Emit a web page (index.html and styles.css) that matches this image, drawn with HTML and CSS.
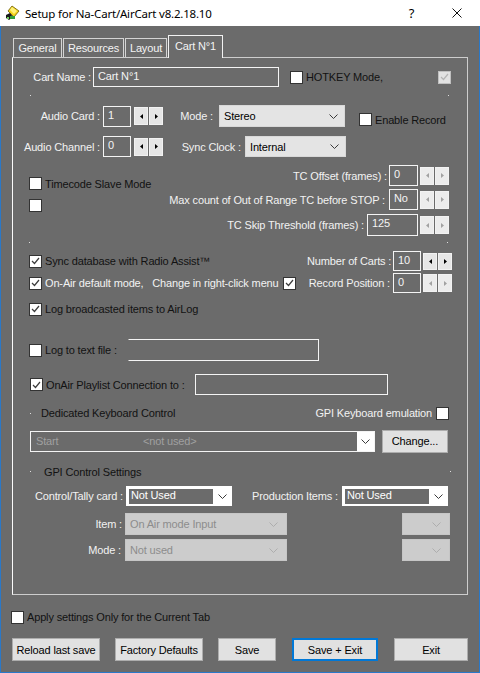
FILE: index.html
```html
<!DOCTYPE html>
<html>
<head>
<meta charset="utf-8">
<link rel="stylesheet" href="styles.css">
</head>
<body>
<div class="window">
  <div class="titlebar">
    <svg class="app-icon" viewBox="0 0 16 16">
      <polygon points="7,1 14,6 9,12 3,6" fill="#f3d21b" stroke="#6b5a00" stroke-width="0.8"/>
      <polygon points="7,2 12,6 9,9 5,5" fill="#fff27a"/>
      <polygon points="1,10 5,8 8,12 4,15 1,13" fill="#1a1a1a"/>
      <rect x="5" y="11" width="5" height="3" fill="#2f9e3a"/>
      <rect x="2" y="12" width="2" height="2" fill="#6fcf5a"/>
    </svg>
    <span class="title">Setup for Na-Cart/AirCart v8.2.18.10</span>
    <span class="help">?</span>
    <span class="close"><svg viewBox="0 0 10 10" class="close-x"><path d="M0.5 0.5L9.5 9.5M9.5 0.5L0.5 9.5" stroke="#111" stroke-width="1" fill="none"/></svg></span>
  </div>

  <div class="tabs">
    <div class="tab t-general">General</div>
    <div class="tab t-res">Resources</div>
    <div class="tab t-layout">Layout</div>
    <div class="tab t-cart active">Cart N°1</div>
  </div>

  <div class="panel">
    <!-- Cart name -->
    <div class="row r-name">
      <span class="lbl w80 pr2">Cart Name :</span>
      <span class="field w186 h20">Cart N°1</span>
      <span class="chk ml11 w148"><span class="cb"></span><span class="dark">HOTKEY Mode,</span></span>
      <span class="cb cb-dis"><svg viewBox="0 0 9 8"><polyline points="1,4 3.5,6.5 8,1" fill="none" stroke="#b4b4b4" stroke-width="1.2"/></svg></span>
    </div>
    <div class="row dots d1"><i class="dot"></i><i class="dot"></i></div>

    <!-- Audio card -->
    <div class="row r-card">
      <span class="lbl w90 pr3">Audio Card :</span>
      <span class="field w28 h21">1</span>
      <span class="spin ml3"><span class="sb"><svg viewBox="0 0 3 5" class="tri"><path d="M3 0V5L0 2.5Z"/></svg></span><span class="sb"><svg viewBox="0 0 3 5" class="tri"><path d="M0 0V5L3 2.5Z"/></svg></span></span>
      <span class="lbl w56 pr6">Mode :</span>
      <span class="combo w126 h22"><span>Stereo</span><svg class="chev" viewBox="0 0 9 5"><polyline points="0.5,0.5 4.5,4.5 8.5,0.5"/></svg></span>
      <span class="chk ml14 low"><span class="cb"></span><span class="dark">Enable Record</span></span>
    </div>

    <!-- Audio channel -->
    <div class="row r-chan">
      <span class="lbl w90 pr3">Audio Channel :</span>
      <span class="field w28 h21">0</span>
      <span class="spin ml3"><span class="sb"><svg viewBox="0 0 3 5" class="tri"><path d="M3 0V5L0 2.5Z"/></svg></span><span class="sb"><svg viewBox="0 0 3 5" class="tri"><path d="M0 0V5L3 2.5Z"/></svg></span></span>
      <span class="lbl w82 pr4">Sync Clock :</span>
      <span class="combo w101 h21"><span>Internal</span><svg class="chev" viewBox="0 0 9 5"><polyline points="0.5,0.5 4.5,4.5 8.5,0.5"/></svg></span>
    </div>

    <!-- Timecode -->
    <div class="tc">
      <div class="tc-left">
        <span class="chk"><span class="cb"></span><span class="dark">Timecode Slave Mode</span></span>
        <span class="cb tc-cb2"></span>
      </div>
      <div class="tc-right">
        <div class="row tc1">
          <span class="lbl">TC Offset (frames) :</span>
          <span class="field w29 h21 ml2">0</span>
          <span class="spin dis ml2"><span class="sb"><svg viewBox="0 0 3 5" class="tri"><path d="M3 0V5L0 2.5Z"/></svg></span><span class="sb"><svg viewBox="0 0 3 5" class="tri"><path d="M0 0V5L3 2.5Z"/></svg></span></span>
        </div>
        <div class="row tc2">
          <span class="lbl">Max count of Out of Range TC before STOP :</span>
          <span class="field w29 h21 ml4">No</span>
          <span class="spin dis ml2"><span class="sb"><svg viewBox="0 0 3 5" class="tri"><path d="M3 0V5L0 2.5Z"/></svg></span><span class="sb"><svg viewBox="0 0 3 5" class="tri"><path d="M0 0V5L3 2.5Z"/></svg></span></span>
        </div>
        <div class="row tc3">
          <span class="lbl">TC Skip Threshold (frames) :</span>
          <span class="field w51 h22 ml3">125</span>
          <span class="spin dis ml2"><span class="sb"><svg viewBox="0 0 3 5" class="tri"><path d="M3 0V5L0 2.5Z"/></svg></span><span class="sb"><svg viewBox="0 0 3 5" class="tri"><path d="M0 0V5L3 2.5Z"/></svg></span></span>
        </div>
      </div>
    </div>
    <div class="row dots d2"><i class="dot"></i><i class="dot"></i></div>

    <!-- Sync -->
    <div class="row s1">
      <span class="chk w278"><span class="cb"><svg viewBox="0 0 9 8"><polyline points="1,4 3.5,6.5 8,1" fill="none" stroke="#3c3c3c" stroke-width="1.2"/></svg></span><span class="dark">Sync database with Radio Assist™</span></span>
      <span class="lbl w86 pr3">Number of Carts :</span>
      <span class="field w28 h20">10</span>
      <span class="spin ml2 act"><span class="sb"><svg viewBox="0 0 3 5" class="tri"><path d="M3 0V5L0 2.5Z"/></svg></span><span class="sb"><svg viewBox="0 0 3 5" class="tri"><path d="M0 0V5L3 2.5Z"/></svg></span></span>
    </div>
    <div class="row s2">
      <span class="chk w254"><span class="cb"><svg viewBox="0 0 9 8"><polyline points="1,4 3.5,6.5 8,1" fill="none" stroke="#3c3c3c" stroke-width="1.2"/></svg></span><span>On-Air default mode,   Change in right-click menu</span></span>
      <span class="cb"><svg viewBox="0 0 9 8"><polyline points="1,4 3.5,6.5 8,1" fill="none" stroke="#3c3c3c" stroke-width="1.2"/></svg></span>
      <span class="lbl w97 pr3">Record Position :</span>
      <span class="field w28 h20">0</span>
      <span class="spin dis ml2"><span class="sb"><svg viewBox="0 0 3 5" class="tri"><path d="M3 0V5L0 2.5Z"/></svg></span><span class="sb"><svg viewBox="0 0 3 5" class="tri"><path d="M0 0V5L3 2.5Z"/></svg></span></span>
    </div>
    <div class="row s3">
      <span class="chk"><span class="cb"><svg viewBox="0 0 9 8"><polyline points="1,4 3.5,6.5 8,1" fill="none" stroke="#3c3c3c" stroke-width="1.2"/></svg></span><span class="dark">Log broadcasted items to AirLog</span></span>
    </div>

    <!-- Log to text file -->
    <div class="row r-log">
      <span class="chk w99"><span class="cb"></span><span class="dark">Log to text file :</span></span>
      <span class="field open w191 h22"></span>
    </div>
    <div class="row r-onair">
      <span class="chk w165"><span class="cb"><svg viewBox="0 0 9 8"><polyline points="1,4 3.5,6.5 8,1" fill="none" stroke="#3c3c3c" stroke-width="1.2"/></svg></span><span class="dark">OnAir Playlist Connection to :</span></span>
      <span class="field w193 h21"></span>
    </div>

    <!-- Dedicated keyboard -->
    <div class="row r-ded">
      <i class="dot"></i>
      <span class="dark ml10">Dedicated Keyboard Control</span>
      <span class="push">GPI Keyboard emulation</span>
      <span class="cb ml4"></span>
    </div>
    <div class="row r-keycombo">
      <span class="bigcombo w345 h21"><span class="val"><span class="start">Start</span><span>&lt;not used&gt;</span></span><span class="arr"><svg class="chev" viewBox="0 0 9 5"><polyline points="0.5,0.5 4.5,4.5 8.5,0.5"/></svg></span></span>
      <span class="btn w66 h22 ml7">Change...</span>
    </div>

    <!-- GPI control -->
    <div class="row r-gpi">
      <i class="dot"></i>
      <span class="dark ml13">GPI Control Settings</span>
      <i class="dot push"></i>
    </div>
    <div class="row r-ctl">
      <span class="lbl w113 pr3">Control/Tally card :</span>
      <span class="combo-dark w106 h20"><span class="val">Not Used</span><span class="arr"><svg class="chev" viewBox="0 0 9 5"><polyline points="0.5,0.5 4.5,4.5 8.5,0.5"/></svg></span></span>
      <span class="lbl w110 pr4">Production Items :</span>
      <span class="combo-dark w106 h20"><span class="val">Not Used</span><span class="arr"><svg class="chev" viewBox="0 0 9 5"><polyline points="0.5,0.5 4.5,4.5 8.5,0.5"/></svg></span></span>
    </div>
    <div class="row r-item">
      <span class="lbl w112 pr3">Item :</span>
      <span class="dcombo w162 h22"><span>On Air mode Input</span><svg class="chev" viewBox="0 0 9 5"><polyline points="0.5,0.5 4.5,4.5 8.5,0.5"/></svg></span>
      <span class="dcombo w48 h22 ml115"><span></span><svg class="chev" viewBox="0 0 9 5"><polyline points="0.5,0.5 4.5,4.5 8.5,0.5"/></svg></span>
    </div>
    <div class="row r-mode">
      <span class="lbl w112 pr4">Mode :</span>
      <span class="dcombo w162 h22"><span>Not used</span><svg class="chev" viewBox="0 0 9 5"><polyline points="0.5,0.5 4.5,4.5 8.5,0.5"/></svg></span>
      <span class="dcombo w48 h22 ml115"><span></span><svg class="chev" viewBox="0 0 9 5"><polyline points="0.5,0.5 4.5,4.5 8.5,0.5"/></svg></span>
    </div>
  </div>

  <div class="row r-apply">
    <span class="chk"><span class="cb"></span><span class="dark">Apply settings Only for the Current Tab</span></span>
  </div>

  <div class="row r-buttons">
    <span class="btn w88">Reload last save</span>
    <span class="btn w88 ml15">Factory Defaults</span>
    <span class="btn w58 ml15">Save</span>
    <span class="btn w86 ml16 focus">Save + Exit</span>
    <span class="btn w74 ml16">Exit</span>
  </div>
</div>
</body>
</html>
```

FILE: styles.css
```css
* { box-sizing: border-box; margin: 0; padding: 0; }
body {
  margin: 0;
  background: #6b6b6b;
  font-family: "Liberation Sans", Arial, sans-serif;
  font-size: 11px;
  letter-spacing: -0.15px;
  color: #f2f2f2;
}
.window {
  width: 480px;
  height: 673px;
  background: #6b6b6b;
  box-shadow: inset 1px 0 #2a78c8, inset -1px 0 #2a78c8, inset 0 -1px #2a78c8;
  display: flex;
  flex-direction: column;
  overflow: hidden;
}
.titlebar {
  height: 26px;
  background: #fff;
  display: flex;
  align-items: center;
  color: #000;
  flex: none;
}
.app-icon { width: 16px; height: 16px; margin-left: 5px; flex: none; }
.title {
  flex: 1;
  margin-left: 4px;
  font-family: "Noto Sans", sans-serif;
  font-size: 11.5px;
  letter-spacing: -0.2px;
  white-space: nowrap;
}
.help {
  width: 45px;
  text-align: center;
  font-family: "Noto Sans", sans-serif;
  font-size: 13px;
  letter-spacing: 0;
}
.close { width: 46px; height: 26px; display: flex; align-items: center; justify-content: center; }
.close-x { width: 10px; height: 10px; }

.tabs {
  display: flex;
  align-items: flex-end;
  height: 22px;
  margin-top: 9px;
  padding-left: 13px;
  flex: none;
  position: relative;
  z-index: 1;
}
.tab {
  height: 19px;
  border: 1px solid #d4d4d4;
  border-bottom: none;
  margin-right: 1px;
  display: flex;
  align-items: center;
  justify-content: center;
  color: #f4f4f4;
  flex: none;
}
.t-general { width: 49px; }
.t-res { width: 61px; }
.t-layout { width: 42px; }
.t-cart { width: 55px; }
.tab.active {
  height: 23px;
  margin-bottom: -1px;
  background: #6b6b6b;
  border-color: #f2f2f2;
  padding-bottom: 2px;
}

.panel {
  margin-left: 12px;
  width: 456px;
  height: 538px;
  border: 1px solid #cdcdcd;
  border-left-color: #fbfbfb;
  display: flex;
  flex-direction: column;
  flex: none;
}

.row { display: flex; align-items: center; flex: none; }
.lbl { text-align: right; white-space: nowrap; flex: none; }
.dark { color: #121212; }
.push { margin-left: auto; }

/* widths / spacing helpers */
.w28 { width: 28px; } .w29 { width: 29px; } .w48 { width: 48px; } .w51 { width: 51px; }
.w56 { width: 56px; } .w58 { width: 58px; } .w66 { width: 66px; } .w74 { width: 74px; }
.w80 { width: 80px; } .w82 { width: 82px; } .w86 { width: 86px; } .w88 { width: 88px; }
.w90 { width: 90px; } .w97 { width: 97px; } .w99 { width: 99px; } .w101 { width: 101px; }
.w106 { width: 106px; } .w110 { width: 110px; } .w112 { width: 112px; } .w113 { width: 113px; }
.w126 { width: 126px; } .w148 { width: 148px; } .w162 { width: 162px; } .w165 { width: 165px; }
.w186 { width: 186px; } .w191 { width: 191px; } .w193 { width: 193px; } .w254 { width: 254px; }
.w278 { width: 278px; } .w345 { width: 345px; }
.h20 { height: 20px; } .h21 { height: 21px; } .h22 { height: 22px; }
.pr2 { padding-right: 2px; } .pr3 { padding-right: 3px; } .pr4 { padding-right: 4px; } .pr6 { padding-right: 6px; }
.ml2 { margin-left: 2px; } .ml3 { margin-left: 3px; } .ml4 { margin-left: 4px; } .ml7 { margin-left: 7px; }
.ml10 { margin-left: 10px; } .ml11 { margin-left: 11px; } .ml13 { margin-left: 13px; } .ml14 { margin-left: 14px; }
.ml15 { margin-left: 15px; } .ml16 { margin-left: 16px; } .ml115 { margin-left: 115px; }

/* controls */
.field {
  border: 1px solid #f4f4f4;
  padding: 2px 0 0 4px;
  line-height: 13px;
  color: #f4f4f4;
  flex: none;
  white-space: nowrap;
  overflow: hidden;
}
.field.open { border-left-color: transparent; }

.spin { display: flex; flex: none; height: 18px; gap: 1px; }
.sb {
  width: 14px;
  height: 100%;
  background: #e6e6e6;
  border: 1px solid #f2f2f2;
  display: flex;
  align-items: center;
  justify-content: center;
}
.tri { width: 3px; height: 5px; fill: #000; }
.spin.dis .sb { background: #ececec; }
.spin.dis .tri { fill: #a2a2a2; }
.spin.act { height: 17px; }

.chev { width: 9px; height: 5px; fill: none; stroke: #3a3a3a; stroke-width: 1; flex: none; }

.combo {
  background: #e4e4e4;
  border: 1px solid #d8d8d8;
  color: #000;
  display: flex;
  align-items: center;
  justify-content: space-between;
  padding: 0 6px 0 4px;
  flex: none;
}
.combo-dark {
  background: #fff;
  padding: 3px 0 2px 3px;
  display: flex;
  flex: none;
}
.combo-dark .val {
  flex: 1;
  background: #6b6b6b;
  color: #fff;
  padding-left: 2px;
  line-height: 12px;
}
.combo-dark .arr { width: 19px; display: flex; align-items: center; justify-content: center; }

.bigcombo { border: 1px solid #f4f4f4; display: flex; flex: none; }
.bigcombo .val { flex: 1; display: flex; align-items: center; color: #a0a0a0; padding-left: 5px; }
.bigcombo .start { width: 107px; }
.bigcombo .arr { width: 17px; background: #fff; display: flex; align-items: center; justify-content: center; }

.dcombo {
  background: #cccccc;
  border: 1px solid #c6c6c6;
  color: #8c8c8c;
  display: flex;
  align-items: center;
  justify-content: space-between;
  padding: 0 8px 0 4px;
  flex: none;
}
.dcombo .chev { stroke: #adadad; }

.btn {
  background: #e1e1e1;
  border: 1px solid #adadad;
  color: #000;
  display: flex;
  align-items: center;
  justify-content: center;
  height: 23px;
  flex: none;
  white-space: nowrap;
}
.btn.focus { border-color: #0078d7; box-shadow: inset 0 0 0 1px #0078d7; }

.cb {
  width: 13px;
  height: 13px;
  background: #fff;
  border: 1px solid #333;
  flex: none;
  display: flex;
  align-items: center;
  justify-content: center;
}
.cb svg { width: 9px; height: 8px; }
.cb-dis { background: #e2e2e2; border-color: #c0c0c0; }
.chk { display: flex; align-items: center; flex: none; white-space: pre; }
.chk .cb + span { margin-left: 3px; }
.chk.low { align-self: flex-end; margin-bottom: 1px; }

.dot { display: block; width: 1px; height: 1px; background: #dedede; flex: none; }
.dots { justify-content: space-between; height: 1px; }

/* rows in panel */
.r-name { margin-top: 9px; height: 20px; }
.d1 { margin-top: 8px; padding: 0 18px 0 17px; }
.r-card { margin-top: 9px; height: 22px; }
.r-chan { margin-top: 9px; height: 21px; }
.tc { display: flex; margin-top: 7px; height: 73px; flex: none; }
.tc-left { padding-left: 16px; padding-top: 13px; display: flex; flex-direction: column; }
.tc-cb2 { margin-top: 9px; }
.tc-right { margin-left: auto; padding-right: 18px; display: flex; flex-direction: column; align-items: flex-end; }
.tc1 { margin-top: 1px; height: 21px; }
.tc2 { margin-top: 3px; height: 21px; }
.tc3 { margin-top: 4px; height: 22px; }
.d2 { margin-top: 5px; padding: 0 19px 0 16px; }
.s1 { margin-top: 8px; height: 20px; padding-left: 16px; }
.s2 { margin-top: 2px; height: 20px; padding-left: 16px; }
.s3 { margin-top: 9px; height: 14px; padding-left: 16px; }
.r-log { margin-top: 23px; height: 22px; padding-left: 16px; }
.r-onair { margin-top: 13px; height: 21px; padding-left: 17px; }
.r-ded { margin-top: 11px; height: 14px; padding: 0 18px 0 17px; }
.r-keycombo { margin-top: 10px; height: 22px; padding-left: 17px; }
.r-gpi { margin-top: 13px; height: 13px; padding: 0 16px 0 17px; }
.r-ctl { margin-top: 8px; height: 20px; }
.r-item { margin-top: 7px; height: 22px; }
.r-mode { margin-top: 4px; height: 22px; }

.r-apply { margin-top: 15px; height: 14px; padding-left: 11px; }
.r-buttons { margin-top: 14px; height: 23px; padding-left: 12px; }
```
